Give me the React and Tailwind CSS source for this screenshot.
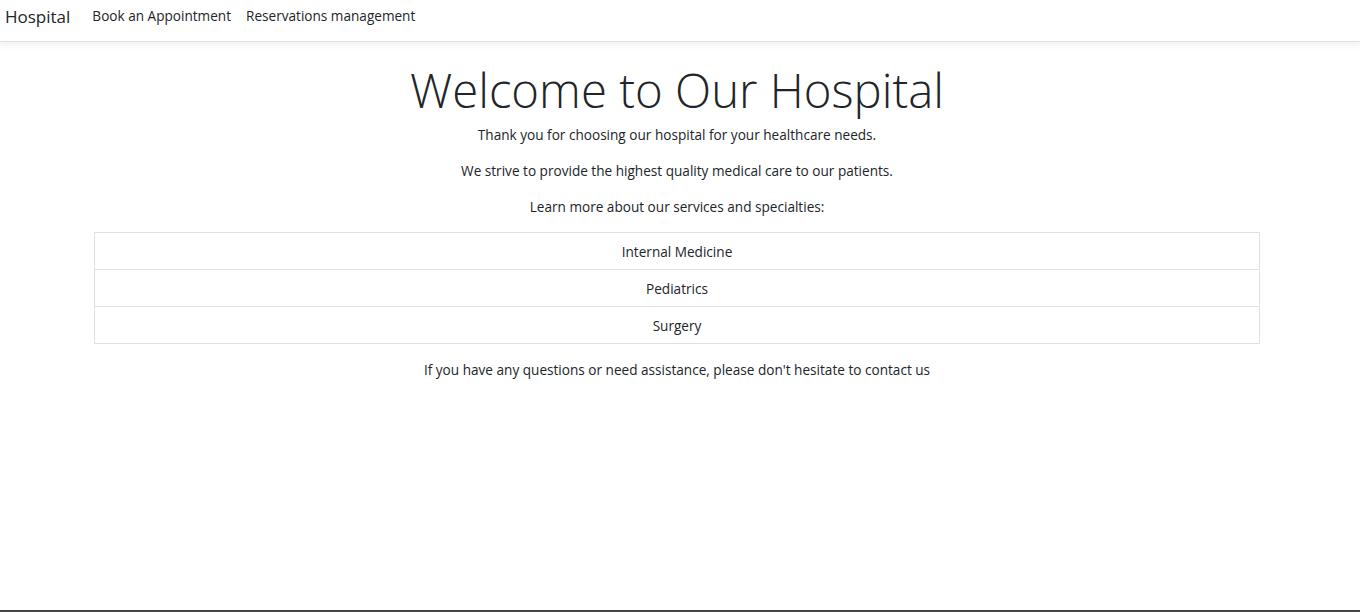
export default function App() {
  const font = { fontFamily: '"Open Sans", "Noto Sans", sans-serif' };
  return (
    <div className="h-[612px] w-[1360px] overflow-hidden bg-white text-[#212529] border-b-2 border-[#444]" style={font}>
      <nav className="h-[42px] border-b border-[#dee2e6] shadow-[0_4px_6px_rgba(0,0,0,0.05)] flex items-center">
        <span className="ml-[5px] text-[17px] leading-none -mt-[8px]">Hospital</span>
        <div className="ml-[22px] flex gap-[15px] text-[13.6px] -mt-[8px]">
          <span>Book an Appointment</span>
          <span>Reservations management</span>
        </div>
      </nav>
      <main className="ml-[94px] w-[1166px] flex flex-col items-center text-[13.6px]">
        <h1 className="mt-[16px] text-[47.3px] font-light leading-[64px]">Welcome to Our Hospital</h1>
        <p className="leading-[20px] mt-[3px]">Thank you for choosing our hospital for your healthcare needs.</p>
        <p className="leading-[20px] mt-[16px]">We strive to provide the highest quality medical care to our patients.</p>
        <p className="leading-[20px] mt-[16px]">Learn more about our services and specialties:</p>
        <ul className="mt-[15px] w-full border border-[#dee2e6]">
          <li className="h-[37px] pt-[2px] flex items-center justify-center border-b border-[#dee2e6]">Internal Medicine</li>
          <li className="h-[37px] pt-[2px] flex items-center justify-center border-b border-[#dee2e6]">Pediatrics</li>
          <li className="h-[36px] pt-[2px] flex items-center justify-center">Surgery</li>
        </ul>
        <p className="mt-[16px] leading-[20px]">If you have any questions or need assistance, please don't hesitate to contact us</p>
      </main>
    </div>
  );
}
